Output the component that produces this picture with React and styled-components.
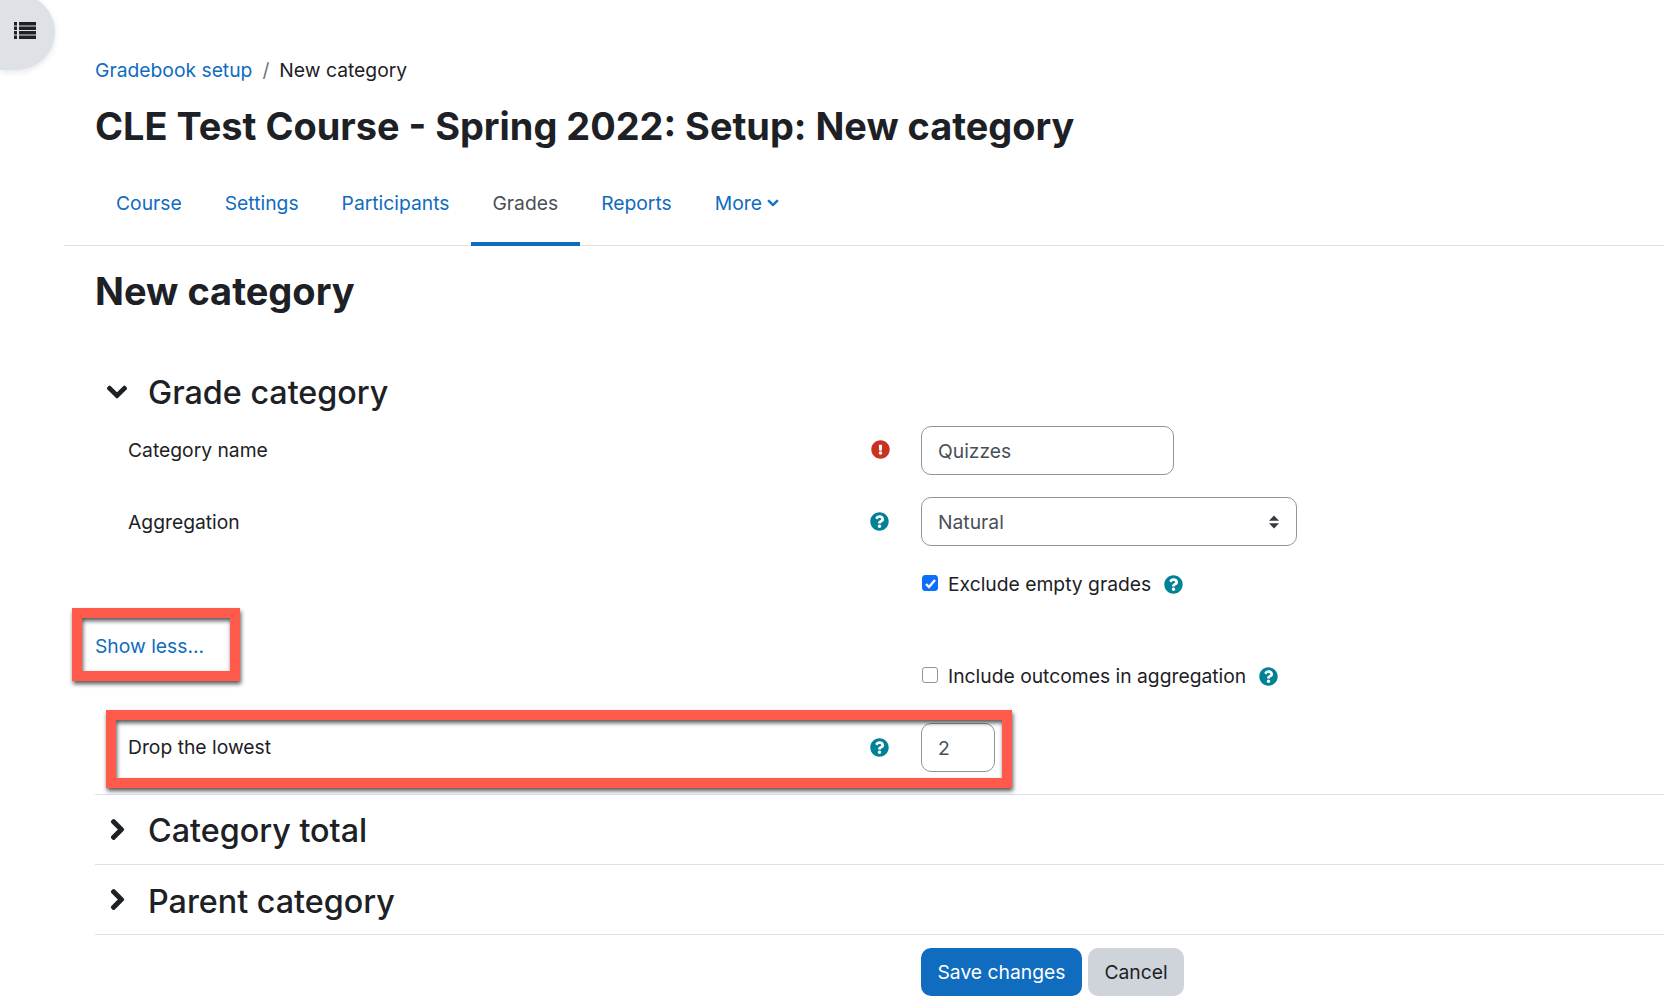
/* Libraries */
import React from 'react';
import styled, {createGlobalStyle} from 'styled-components';
import {
  FaChevronDown,
  FaChevronRight,
  FaExclamationCircle,
  FaQuestionCircle,
} from 'react-icons/fa';

const GlobalStyle = createGlobalStyle`
  html, body {
    margin: 0;
    background: #fff;
  }
  * {
    box-sizing: border-box;
  }
  body {
    color: #1d2125;
    font-family: Inter, "Noto Sans", sans-serif;
    font-size: 19.3px;
    overflow: hidden;
  }
`;

const Page = styled.div`
  position: relative;
  height: 1008px;
  padding-left: 64px;
  overflow: hidden;
`;

const DrawerToggle = styled.div`
  position: absolute;
  top: -6px;
  left: 0;
  display: flex;
  align-items: center;
  width: 55px;
  height: 76px;
  padding: 0 0 3px 14px;
  border-radius: 0 38px 38px 0;
  background: #dee2e6;
  box-shadow: 0 2px 6px rgba(0, 0, 0, .1);
`;

const Header = styled.header`
  padding: 55px 0 0 31px;
`;

const Breadcrumb = styled.nav`
  display: flex;
  align-items: center;
  height: 30px;
`;

const Link = styled.a`
  color: #0f6cbf;
`;

const Divider = styled.span`
  padding: 0 10px;
  color: #6a737b;
`;

const Title = styled.h1`
  height: 56px;
  margin: 13px 0 0;
  font-size: 37.9px;
  font-weight: 700;
  line-height: 56px;
`;

const Tabs = styled.nav`
  display: flex;
  height: 85px;
  margin-top: 7px;
  padding-left: 30.5px;
  border-bottom: 1px solid #dee2e6;
`;

const Tab = styled.a`
  display: flex;
  align-items: center;
  gap: 5px;
  height: 85px;
  padding: 2px 21.5px 0;
  border-bottom: 4px solid ${props => props.$active ? '#0f6cbf' : 'transparent'};
  color: ${props => props.$active ? '#495057' : '#0f6cbf'};
  svg {
    stroke: currentColor;
    stroke-width: 30px;
  }
`;

const Main = styled.main`
  padding-left: 31px;
`;

const Heading = styled.h2`
  height: 56px;
  margin: 17px 0 0;
  font-size: 38px;
  font-weight: 700;
  line-height: 56px;
`;

const Section = styled.section`
  display: flex;
  align-items: center;
  height: ${props => props.$height || 70}px;
  margin-top: ${props => props.$top || 0}px;
  border-bottom: ${props => props.$plain ? 'none' : '1px solid #dee2e6'};
`;

const Caret = styled.span`
  display: flex;
  justify-content: center;
  width: 44px;
  margin: ${props => props.$lift || 0}px 9px 0 0;
  font-size: ${props => props.$size}px;
  svg {
    stroke: currentColor;
    stroke-width: 30px;
  }
`;

const SectionTitle = styled.h3`
  margin: ${props => props.$down || 0}px 0 0;
  font-size: 32.3px;
  font-weight: 500;
`;

const FormRow = styled.div`
  position: relative;
  display: grid;
  grid-template-columns: 741.5px 51.5px 1fr;
  align-items: center;
  height: ${props => props.$height}px;
  margin-top: ${props => props.$top || 0}px;
  padding-left: 33px;
`;

const Label = styled.span`
  margin-bottom: ${props => props.$up ? '2px' : '0'};
`;

const HelpSlot = styled.span`
  display: flex;
  margin: ${props => props.$error ? '0 0 3px 1px' : '0'};
  font-size: 19px;
  color: ${props => props.$error ? '#ca3120' : '#008196'};
`;

const TextBox = styled.input`
  width: ${props => props.$width}px;
  height: 49px;
  padding: 0 16px;
  border: 1px solid #8f959e;
  border-radius: 10px;
  color: #495057;
  font: inherit;
  outline: none;
`;

const SelectBox = styled.div`
  display: flex;
  align-items: center;
  justify-content: space-between;
  width: 376px;
  height: 49px;
  padding: 0 16px;
  border: 1px solid #8f959e;
  border-radius: 10px;
  color: #495057;
`;

const CheckField = styled.label`
  grid-column: 3;
  display: flex;
  align-items: center;
  color: #1d2125;
`;

const CheckMark = styled.span`
  display: flex;
  align-items: center;
  justify-content: center;
  width: 16px;
  height: 16px;
  margin: -2px 10px 0 1px;
  border: 1px solid ${props => props.$checked ? '#0d6efd' : '#8f959e'};
  border-radius: 3px;
  background: ${props => props.$checked ? '#0d6efd' : '#fff'};
`;

const CheckHelp = styled.span`
  display: flex;
  margin-left: 13px;
  color: #008196;
  font-size: 19px;
`;

const ShowLess = styled.div`
  position: relative;
  align-self: start;
  margin: 35px 0 0 -33px;
`;

const Include = styled(CheckField)`
  align-self: start;
  margin-top: 65px;
`;

const Highlight = styled.div`
  position: absolute;
  top: ${props => props.$top}px;
  left: ${props => props.$left}px;
  width: ${props => props.$width}px;
  height: ${props => props.$height}px;
  border: 10px solid #ff5a4c;
  filter: drop-shadow(1px 3px 2px rgba(0, 0, 0, .65));
  pointer-events: none;
`;

const Actions = styled.div`
  display: flex;
  gap: 6px;
  margin: 13px 0 0 826px;
`;

const Button = styled.button`
  height: 48px;
  padding: 0 16.5px;
  border: none;
  border-radius: 10px;
  background: ${props => props.$primary ? '#0f6cbf' : '#ced4da'};
  color: ${props => props.$primary ? '#fff' : '#1d2125'};
  font: inherit;
`;

const DrawerIcon = () =>
  <svg width="22" height="17" viewBox="0 0 22 17" fill="#1d2125">
    <path d="M0 0h3v3.5H0zM5 0h17v3.5H5zM0 4.5h3V8H0zM5 4.5h17V8H5zM0 9h3v3.5H0zM5 9h17v3.5H5zM0 13.5h3V17H0zM5 13.5h17V17H5z"/>
  </svg>

const SelectArrows = () =>
  <svg width="12" height="14" viewBox="0 0 12 14" fill="#343a40">
    <path d="M6 0.5 11 5.8H1z"/>
    <path d="M6 13.5 1 8.2h10z"/>
  </svg>

const Tick = () =>
  <svg width="13" height="13" viewBox="0 0 13 13" fill="none" stroke="#fff" strokeWidth="2.4">
    <path d="M2 7l3 3 6-7"/>
  </svg>

const App = () =>
  <Page>
    <GlobalStyle/>
    <DrawerToggle><DrawerIcon/></DrawerToggle>
    <Header>
      <Breadcrumb>
        <Link>Gradebook setup</Link>
        <Divider>/</Divider>
        <span>New category</span>
      </Breadcrumb>
      <Title>CLE Test Course - Spring 2022: Setup: New category</Title>
    </Header>
    <Tabs>
      <Tab>Course</Tab>
      <Tab>Settings</Tab>
      <Tab>Participants</Tab>
      <Tab $active>Grades</Tab>
      <Tab>Reports</Tab>
      <Tab>More <FaChevronDown size={12}/></Tab>
    </Tabs>
    <Main>
      <Heading>New category</Heading>
      <Section $plain $height={50} $top={48}>
        <Caret $size={22}><FaChevronDown/></Caret>
        <SectionTitle>Grade category</SectionTitle>
      </Section>
      <FormRow $height={49} $top={9}>
        <Label $up>Category name</Label>
        <HelpSlot $error><FaExclamationCircle/></HelpSlot>
        <TextBox $width={253} value="Quizzes" readOnly/>
      </FormRow>
      <FormRow $height={49} $top={22}>
        <Label>Aggregation</Label>
        <HelpSlot><FaQuestionCircle/></HelpSlot>
        <SelectBox>Natural <SelectArrows/></SelectBox>
      </FormRow>
      <FormRow $height={30} $top={23}>
        <CheckField>
          <CheckMark $checked><Tick/></CheckMark>
          Exclude empty grades
          <CheckHelp><FaQuestionCircle/></CheckHelp>
        </CheckField>
      </FormRow>
      <FormRow $height={92}>
        <ShowLess>
          <Link>Show less...</Link>
          <Highlight $top={-26} $left={-23} $width={168} $height={73}/>
        </ShowLess>
        <span/>
        <Include>
          <CheckMark/>
          Include outcomes in aggregation
          <CheckHelp><FaQuestionCircle/></CheckHelp>
        </Include>
      </FormRow>
      <FormRow $height={49} $top={32}>
        <Label $up>Drop the lowest</Label>
        <HelpSlot><FaQuestionCircle/></HelpSlot>
        <TextBox $width={74} value="2" readOnly/>
        <Highlight $top={-13} $left={11} $width={906} $height={78}/>
      </FormRow>
      <Section $height={23}/>
      <Section>
        <Caret $size={23}><FaChevronRight/></Caret>
        <SectionTitle $down={1}>Category total</SectionTitle>
      </Section>
      <Section>
        <Caret $size={23}><FaChevronRight/></Caret>
        <SectionTitle $down={3}>Parent category</SectionTitle>
      </Section>
      <Actions>
        <Button $primary>Save changes</Button>
        <Button>Cancel</Button>
      </Actions>
    </Main>
  </Page>

export default App;
